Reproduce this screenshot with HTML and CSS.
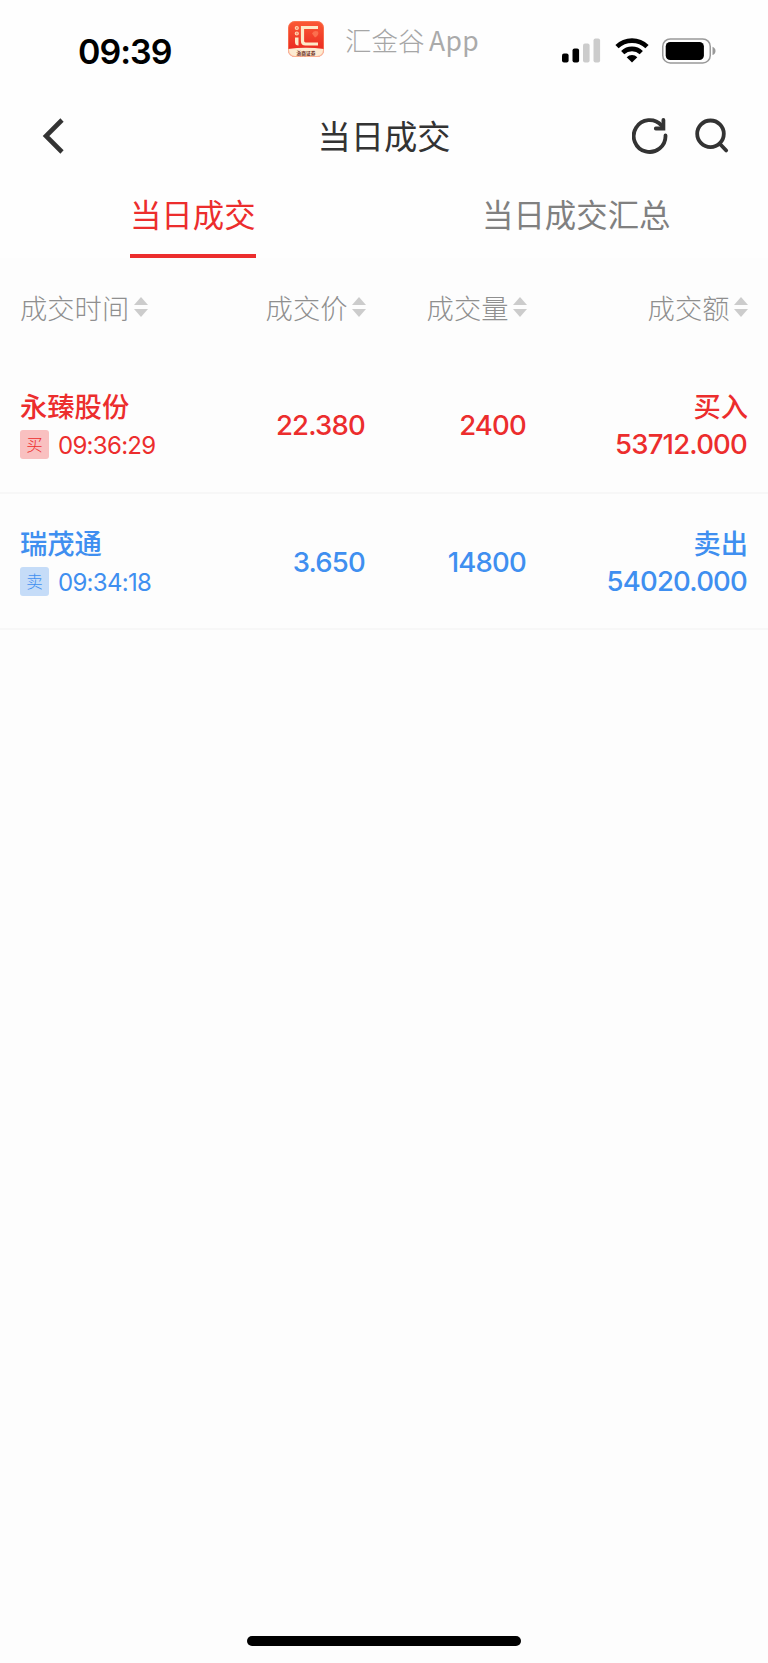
FILE: index.html
```html
<!DOCTYPE html>
<html lang="zh-CN">
<head>
    <meta charset="UTF-8">
    <meta name="viewport" content="width=device-width, initial-scale=1.0">
    <title>当日成交</title>
    <link rel="stylesheet" href="styles.css">
</head>
<body>
    <div class="status-bar">
        <span class="clock">09:39</span>
        <div class="brand">
            <svg class="brand-logo" width="36" height="36" viewBox="0 0 36 36">
                <defs>
                    <linearGradient id="logoRed" x1="0" y1="0" x2="0" y2="1">
                        <stop offset="0" stop-color="#fb5a35"/>
                        <stop offset="1" stop-color="#e61f1c"/>
                    </linearGradient>
                    <clipPath id="logoClip"><rect width="36" height="36" rx="7"/></clipPath>
                </defs>
                <g clip-path="url(#logoClip)">
                    <rect width="36" height="36" fill="url(#logoRed)"/>
                    <path d="M0 28Q18 25.500 36 28V36H0Z" fill="#fdebd2"/>
                    <rect x="0.500" y="0.500" width="35" height="35" rx="6.500" fill="none" stroke="#fb8a66" stroke-opacity=".6"/>
                </g>
                <path d="M30 6.500H14.500V20Q14.500 23 17.500 23H30" fill="none" stroke="#fdeac8" stroke-width="3.200"/>
                <circle cx="8.800" cy="7" r="1.500" fill="#fb8a66" stroke="#fdd5b0" stroke-width="1.200"/>
                <circle cx="8.800" cy="12.500" r="1.500" fill="#fb8a66" stroke="#fdd5b0" stroke-width="1.200"/>
                <path d="M7 16.500H10.500V24.500Q7 24.500 7 21Z" fill="#fdeac8"/>
                <path d="M24 12.500Q26 9 30 10.500Q31.500 14 27 16.500Z" fill="#fb6f4e"/>
                <text x="18" y="34" text-anchor="middle" class="logo-text">浙商证券</text>
            </svg>
            <span class="brand-name">汇金谷<span class="brand-app">App</span></span>
        </div>
        <div class="indicators">
            <svg width="39" height="26" viewBox="0 0 39 26">
                <rect x="0" y="15.500" width="6.600" height="9" rx="2"/>
                <rect x="10.500" y="10.500" width="6.600" height="14" rx="2"/>
                <rect x="21" y="5.500" width="6.600" height="19" rx="2" fill="#ccc"/>
                <rect x="31.500" y="0.500" width="6.600" height="24" rx="2" fill="#ccc"/>
            </svg>
            <svg width="34" height="26" viewBox="0 0 34 26">
                <path d="M2 8.700A21.500 21.500 0 0 1 32 8.700M7.700 14.600A13.500 13.500 0 0 1 26.300 14.600" fill="none" stroke="#000" stroke-width="4.600"/>
                <path d="M17 24.500L11.700 19.200A7.800 7.800 0 0 1 22.300 19.200Z"/>
            </svg>
            <svg width="54" height="26" viewBox="0 0 54 26">
                <rect x="0.750" y="0.900" width="47.500" height="24" rx="7.500" fill="none" stroke="#999" stroke-width="1.500"/>
                <rect x="3.700" y="4" width="38.200" height="18" rx="4.500"/>
                <path d="M50.500 8.800Q53.500 10 53.500 12.900T50.500 17Z" fill="#999"/>
            </svg>
        </div>
    </div>

    <div class="nav">
        <svg class="back" width="24" height="36" viewBox="0 0 24 36">
            <path d="M20 2L4 18L20 34" fill="none" stroke="#333" stroke-width="4.600"/>
        </svg>
        <h1>当日成交</h1>
        <div class="nav-actions">
            <svg width="36" height="38" viewBox="0 0 36 38" fill="none" stroke="#333" stroke-width="3.800" stroke-linecap="round">
                <path d="M33.500 18.500A15.900 15.900 0 1 1 29.500 8.500"/>
                <path d="M31.400 3V11.500H23.800"/>
            </svg>
            <svg width="34" height="38" viewBox="0 0 34 38" fill="none" stroke="#333" stroke-width="3.800" stroke-linecap="round">
                <circle cx="15.500" cy="16.800" r="13.300"/>
                <path d="M25 27L31.200 33.500"/>
            </svg>
        </div>
    </div>

    <div class="tabs">
        <div class="tab active"><span>当日成交</span></div>
        <div class="tab"><span>当日成交汇总</span></div>
    </div>

    <div class="table-head">
        <div class="th"><span>成交时间</span><i class="sort"></i></div>
        <div class="th"><span>成交价</span><i class="sort"></i></div>
        <div class="th"><span>成交量</span><i class="sort"></i></div>
        <div class="th"><span>成交额</span><i class="sort"></i></div>
    </div>

    <div class="row buy">
        <div class="stock">
            <div class="name">永臻股份</div>
            <div class="time"><span class="badge">买</span><span>09:36:29</span></div>
        </div>
        <div class="num">22.380</div>
        <div class="num">2400</div>
        <div class="amount">
            <div class="name">买入</div>
            <div class="num">53712.000</div>
        </div>
    </div>

    <div class="row sell">
        <div class="stock">
            <div class="name">瑞茂通</div>
            <div class="time"><span class="badge">卖</span><span>09:34:18</span></div>
        </div>
        <div class="num">3.650</div>
        <div class="num">14800</div>
        <div class="amount">
            <div class="name">卖出</div>
            <div class="num">54020.000</div>
        </div>
    </div>

    <div class="home-indicator"></div>
</body>
</html>
```
FILE: styles.css
```css
* { margin: 0; padding: 0; box-sizing: border-box; }
body {
    display: flex;
    flex-direction: column;
    height: 1663px;
    font-family: Inter, "Noto Sans CJK SC", sans-serif;
    background: #fdfdfd;
    color: #333;
    overflow: hidden;
}
svg { display: block; flex-shrink: 0; }

/* status bar */
.status-bar {
    display: flex;
    align-items: flex-start;
    height: 96px;
    background: #fefefe;
}
.clock {
    width: 210px;
    margin: 32px 0 0 78px;
    font-size: 34px;
    line-height: 40px;
    font-weight: 600;
    letter-spacing: -1px;
    color: #000;
}
.brand {
    display: flex;
    align-items: center;
    width: 274px;
    margin-top: 21px;
    height: 36px;
}
.brand-logo { margin-left: -0.5px; }
.logo-text {
    font-family: "Noto Sans CJK SC", sans-serif;
    font-size: 4.8px;
    font-weight: 700;
    fill: #6b2d1c;
}
.brand-name {
    margin: 1px 0 0 21.5px;
    font-family: "Noto Sans CJK SC", sans-serif;
    font-size: 26.5px;
    line-height: 36px;
    font-weight: 300;
    color: #a6a6a6;
    white-space: nowrap;
}
.brand-app { margin-left: 4.5px; font-weight: 400; letter-spacing: 0.4px; color: #aaa; }
.indicators {
    display: flex;
    gap: 13.5px;
    margin-top: 38px;
}

/* title bar */
.nav {
    display: grid;
    grid-template-columns: 1fr auto 1fr;
    align-items: center;
    height: 80px;
    padding: 0 39px 0 42px;
    background: #fefefe;
}
.nav h1 {
    margin: 2px 3px 0 0;
    font-size: 33.3px;
    line-height: 40px;
    font-weight: 400;
}
.nav-actions {
    display: flex;
    justify-content: flex-end;
    gap: 27px;
}

/* tabs */
.tabs {
    display: grid;
    grid-template-columns: 1fr 1fr;
    height: 82px;
    padding-left: 1px;
    background: #fefefe;
}
.tab {
    display: flex;
    justify-content: center;
    font-size: 31.4px;
    line-height: 80px;
    color: #808080;
}
.tab span { height: 82px; }
.tab.active { color: #ec2d2d; }
.tab.active span { border-bottom: 4px solid #ec2d2d; }

/* list */
.table-head, .row {
    display: grid;
    grid-template-columns: 184px 162px 161px 221px;
    align-items: center;
    padding: 0 20px;
}
.table-head { height: 98px; }
.th {
    display: flex;
    align-items: center;
    justify-content: flex-end;
    gap: 4.500px;
    font-size: 27.3px;
    line-height: 40px;
    font-weight: 300;
    color: #8f8f8f;
}
.th span { padding-top: 6px; }
.th:first-child { justify-content: flex-start; }
.sort {
    display: flex;
    flex-direction: column;
    gap: 4px;
}
.sort:before, .sort:after {
    content: "";
    border: 7px solid transparent;
}
.sort:before { border-top: 0; border-bottom: 8px solid #ccc; }
.sort:after { border-bottom: 0; border-top: 8px solid #ccc; }

.row {
    height: 136.5px;
    padding-top: 3px;
    border-bottom: 2px solid #f7f7f7;
}
.table-head + .row { height: 137.5px; }
.buy { color: #ec2d2d; }
.sell { color: #3f8ff0; }
.name {
    height: 38px;
    font-size: 27.3px;
    line-height: 42px;
    font-weight: 500;
}
.time {
    display: flex;
    align-items: center;
    gap: 9px;
    height: 38px;
    font-size: 24px;
    line-height: 34px;
    letter-spacing: -0.7px;
}
.time span:last-child { padding-top: 4px; }
.badge {
    width: 29px;
    height: 29px;
    border-radius: 3px;
    font-size: 16.5px;
    font-weight: 300;
    line-height: 30px;
    letter-spacing: 0;
    text-align: center;
}
.buy .badge { background: #f9c0c0; }
.sell .badge { background: #c5dcf8; }
.num {
    padding-right: 1px;
    font-size: 27.5px;
    line-height: 38px;
    font-weight: 450;
    letter-spacing: -0.8px;
    text-align: right;
}
.amount { text-align: right; }
.amount .num { line-height: 39px; }

.home-indicator {
    width: 274px;
    height: 10px;
    margin: auto auto 17px;
    border-radius: 5px;
    background: #000;
}
```
